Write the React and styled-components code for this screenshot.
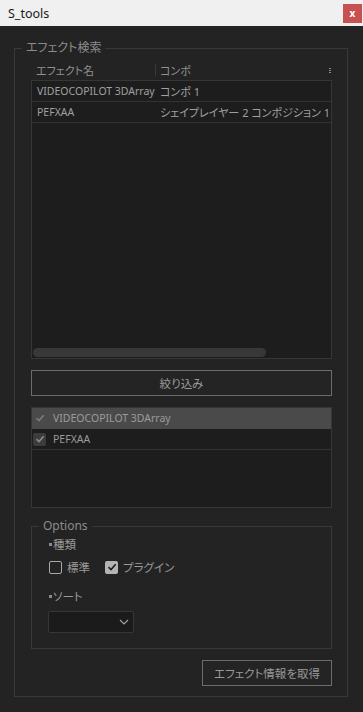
import React from 'react'
import styled, { createGlobalStyle } from 'styled-components';

const GlobalStyle = createGlobalStyle`
    html, body {
        margin: 0;
        padding: 0;
        background-color: #232323;
    }
    body {
        font-family: "Noto Sans", "Noto Sans CJK JP", sans-serif;
        font-feature-settings: "palt";
        color: #9a9a9a;
    }
`;

const Window = styled.div`
    width: 363px;
    height: 712px;
    background-color: #232323;
    display: flex;
    flex-direction: column;
    overflow: hidden;
`;

const TitleBar = styled.div`
    height: 26px;
    background-color: #f0f0f0;
    display: flex;
    align-items: center;
    justify-content: space-between;
    padding-left: 8px;
    flex-shrink: 0;
`;

const TitleText = styled.span`
    font-family: "Noto Sans", sans-serif;
    font-size: 12.5px;
    color: #1a1a1a;
`;

const CloseBTN = styled.div`
    width: 19px;
    height: 19px;
    margin-right: 1px;
    background-color: #c75050;
    color: white;
    display: flex;
    justify-content: center;
    align-items: center;
    font-size: 10px;
    font-weight: bold;
    line-height: 1;
`;

const Main = styled.div`
    padding: 14px 15px 0 14px;
`;

const Group = styled.fieldset`
    margin: 0;
    border: 1px solid #393939;
    padding: ${(props) => props.pad};
    min-width: 0;
    height: ${(props) => props.h || 'auto'};
    box-sizing: border-box;
`;

const Legend = styled.legend`
    margin-left: ${(props) => props.ml};
    padding: 0 4px;
    font-size: 12px;
    line-height: 16px;
    color: #8c8c8c;
`;

const Headings = styled.div`
    display: flex;
    align-items: center;
    height: 20px;
    font-size: 11px;
    color: #909090;
`;

const NameHeading = styled.div`
    width: 124px;
    flex-shrink: 0;
    padding-left: 5px;
    box-sizing: border-box;
`;

const Divider = styled.div`
    width: 1px;
    height: 12px;
    background-color: #383838;
`;

const CompHeading = styled.div`
    flex: 1;
    padding-left: 4px;
`;

const MoreDots = styled.div`
    width: 4px;
    display: flex;
    flex-direction: column;
    align-items: center;
    gap: 1px;
    & span {
        width: 2px;
        height: 1px;
        background-color: #8a8a8a;
    }
`;

const TableBox = styled.div`
    height: 279px;
    border: 1px solid #363636;
    background-color: #1d1d1d;
    display: flex;
    flex-direction: column;
    box-sizing: border-box;
`;

const Row = styled.div`
    display: flex;
    height: 20px;
    align-items: center;
    border-bottom: 1px solid #333333;
    font-size: 10.5px;
    color: #a0a0a0;
    white-space: nowrap;
    overflow: hidden;
`;

const NameCell = styled.div`
    width: 123px;
    flex-shrink: 0;
    padding-left: 5px;
    box-sizing: border-box;
`;

const CompCell = styled.div`
    flex: 1;
    padding-left: 5px;
    font-size: 11px;
`;

const Spacer = styled.div`
    flex: 1;
`;

const ScrollBar = styled.div`
    width: 233px;
    height: 9px;
    margin: 0 0 1px 1px;
    border-radius: 5px;
    background-color: #383838;
`;

const Button = styled.div`
    height: 26px;
    width: ${(props) => props.w || '100%'};
    box-sizing: border-box;
    border: 1px solid #6c6c6c;
    background-color: #242424;
    display: flex;
    justify-content: center;
    align-items: center;
    font-size: 11.5px;
    color: #9a9a9a;
    margin-top: ${(props) => props.mt || '0'};
`;

const CheckList = styled.div`
    height: 101px;
    margin-top: 11px;
    border: 1px solid #363636;
    background-color: #1d1d1d;
    box-sizing: border-box;
`;

const CheckRow = styled.div`
    display: flex;
    align-items: center;
    height: 20px;
    background-color: ${(props) => props.active ? '#4a4a4a' : 'transparent'};
    border-bottom: 1px solid ${(props) => props.active ? '#4a4a4a' : '#333333'};
    font-size: 10.5px;
    color: #9a9a9a;
`;

const ListCheck = styled.div`
    width: 13px;
    height: 13px;
    margin-left: 1px;
    margin-right: 7px;
    border-radius: 2px;
    background-color: ${(props) => props.boxed ? '#3c3c3c' : 'transparent'};
    display: flex;
    justify-content: center;
    align-items: center;
`;

const OptionsWrap = styled.div`
    margin-top: 10px;
`;

const OptionLabel = styled.div`
    display: flex;
    align-items: center;
    font-size: 11.5px;
    color: #9a9a9a;
    height: 16px;
    margin-left: 2px;
    &::before {
        content: '';
        width: 3px;
        height: 3px;
        background-color: #8a8a8a;
        margin-right: 1px;
    }
`;

const CheckGroup = styled.div`
    display: flex;
    align-items: center;
    gap: 15px;
    margin: 7px 0 13px 2px;
`;

const CheckItem = styled.label`
    display: flex;
    align-items: center;
    gap: 5px;
    font-size: 11.5px;
    color: #9a9a9a;
`;

const Box = styled.div`
    width: 13px;
    height: 13px;
    box-sizing: border-box;
    border-radius: 2px;
    border: ${(props) => props.checked ? 'none' : '1.5px solid #a8a8a8'};
    background-color: ${(props) => props.checked ? '#b4b4b4' : 'transparent'};
    display: flex;
    justify-content: center;
    align-items: center;
`;

const Select = styled.div`
    width: 86px;
    height: 22px;
    box-sizing: border-box;
    margin: 7px 0 0 1px;
    border: 1px solid #363636;
    border-radius: 2px;
    background-color: #1b1b1b;
    display: flex;
    justify-content: flex-end;
    align-items: center;
    padding-right: 4px;
`;

const Footer = styled.div`
    display: flex;
    justify-content: flex-end;
    margin-top: 11px;
`;

const Check = ({ color = '#8a8a8a', size = 10 }) => (
    <svg width={size} height={size} viewBox="0 0 10 10">
        <path d="M1.5 5.2 L4 7.6 L8.7 2.2" fill="none" stroke={color} strokeWidth="1.6" />
    </svg>
)

const App = () => {
    return (
        <Window>
            <GlobalStyle />
            <TitleBar>
                <TitleText>S_tools</TitleText>
                <CloseBTN>x</CloseBTN>
            </TitleBar>
            <Main>
                <Group pad="4px 15px 10px 16px" h="657px">
                    <Legend ml="-9px">エフェクト検索</Legend>
                    <Headings>
                        <NameHeading>エフェクト名</NameHeading>
                        <Divider />
                        <CompHeading>コンポ</CompHeading>
                        <MoreDots><span /><span /><span /></MoreDots>
                    </Headings>
                    <TableBox>
                        <Row>
                            <NameCell>VIDEOCOPILOT 3DArray</NameCell>
                            <CompCell>コンポ 1</CompCell>
                        </Row>
                        <Row>
                            <NameCell>PEFXAA</NameCell>
                            <CompCell>シェイプレイヤー 2 コンポジション 1</CompCell>
                        </Row>
                        <Spacer />
                        <ScrollBar />
                    </TableBox>
                    <Button mt="11px">絞り込み</Button>
                    <CheckList>
                        <CheckRow active>
                            <ListCheck><Check color="#7c7c7c" /></ListCheck>
                            VIDEOCOPILOT 3DArray
                        </CheckRow>
                        <CheckRow>
                            <ListCheck boxed><Check color="#8a8a8a" /></ListCheck>
                            PEFXAA
                        </CheckRow>
                    </CheckList>
                    <OptionsWrap>
                        <Group pad="2px 10px 10px 15px" h="131px">
                            <Legend ml="-8px">Options</Legend>
                            <OptionLabel>種類</OptionLabel>
                            <CheckGroup>
                                <CheckItem><Box />標準</CheckItem>
                                <CheckItem><Box checked><Check color="#1e1e1e" /></Box>プラグイン</CheckItem>
                            </CheckGroup>
                            <OptionLabel>ソート</OptionLabel>
                            <Select>
                                <svg width="10" height="6" viewBox="0 0 10 6">
                                    <path d="M1 1 L5 5 L9 1" fill="none" stroke="#a0a0a0" strokeWidth="1.2" />
                                </svg>
                            </Select>
                        </Group>
                    </OptionsWrap>
                    <Footer>
                        <Button w="130px">エフェクト情報を取得</Button>
                    </Footer>
                </Group>
            </Main>
        </Window>
    )
}

export default App
